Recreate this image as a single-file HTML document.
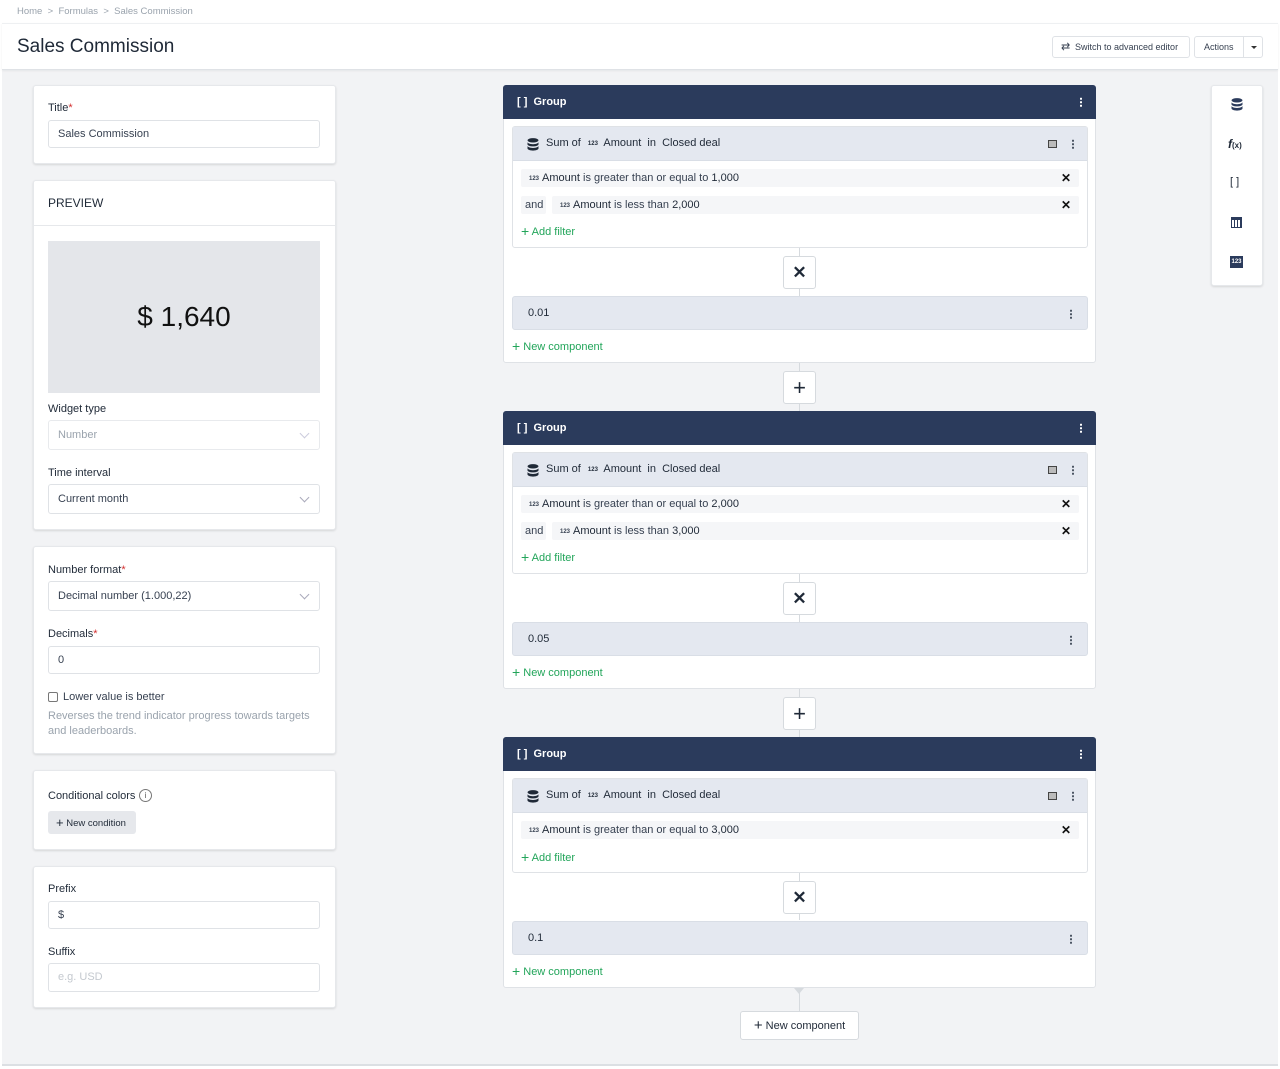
<!DOCTYPE html>
<html><head><meta charset="utf-8"><style>
*{box-sizing:border-box;margin:0;padding:0}
body{width:1280px;height:1069px;background:#fff;font-family:"Liberation Sans",Arial,sans-serif;color:#1f2937;position:relative;overflow:hidden;font-size:11px}
.a{position:absolute}
.bg{left:2px;top:70px;width:1276px;height:996px;background:#f2f3f5;border-bottom:2px solid #dcdfe3}
.hdr{left:2px;top:23px;width:1276px;height:47px;background:#fff;border-top:1px solid #eef0f2;border-bottom:1px solid #dfe2e6;box-shadow:0 1px 2px rgba(0,0,0,.06)}
.card{background:#fff;border-radius:3px;box-shadow:0 1px 2px rgba(0,0,0,.12);border:1px solid #e6e8eb}
.lbl{font-size:11px;color:#1f2937}
.req{color:#d32f2f}
.inp{left:48px;width:272px;height:29px;border:1px solid #dfe2e6;border-radius:3px;background:#fff;padding-left:9px;line-height:27px;font-size:11px;color:#374151}
.chev{position:absolute;right:11px;top:9px;width:7px;height:7px;border-right:1px solid #aab;border-bottom:1px solid #aab;transform:rotate(45deg)}
.grp{left:503px;width:593px;background:#fff;border:1px solid #dfe2e6;border-radius:3px}
.gh{left:-1px;top:-1px;width:593px;height:34px;background:#2b3b5c;border-radius:3px 3px 0 0;color:#fff;font-weight:bold;font-size:11px;line-height:34px;padding-left:14px}
.dots{position:absolute;width:2px;height:10px;background:radial-gradient(circle,#4b5563 1px,transparent 1.2px) 0 0/2px 3.5px repeat-y}
.gh .dots{background:radial-gradient(circle,#fff 1px,transparent 1.2px) 0 0/2px 3.5px repeat-y;right:14px;top:12px}
.ic{left:8px;width:576px;background:#fff;border:1px solid #dfe2e6;border-radius:3px}
.ich{left:0;top:0;width:574px;height:34px;background:#e4e8f0;border-bottom:1px solid #d9dee6;font-size:11px;line-height:33px;padding-left:33px;color:#1f2937}
.fr{height:18px;background:#f5f6f8;border-radius:2px;font-size:11px;line-height:18px;padding-left:8px;color:#374151}
.fr b{font-weight:normal;color:#1f2937}
.n123{font-size:6px;font-weight:bold;vertical-align:1px;margin-right:3px}
.x{position:absolute;right:8px;top:0;font-size:12px;color:#111;font-weight:bold}
.green{color:#22a55a;font-size:11px}
.xb{left:279px;width:33px;height:33px;background:#fff;border:1px solid #d6dade;border-radius:3px;text-align:center;line-height:31px;font-size:17px;font-weight:bold;color:#1f2937}
.val{left:8px;width:576px;height:34px;background:#e4e8f0;border:1px solid #d9dee6;border-radius:3px;line-height:32px;padding-left:15px;font-size:11px}
.vl{width:1px;background:#d6dade}
.pb{left:783px;width:33px;height:33px;background:#fff;border:1px solid #d6dade;border-radius:3px;text-align:center;line-height:31px;font-size:22px;color:#1f2937}
.db{position:absolute;left:14px;top:11px}
</style></head><body>
<svg width="0" height="0" style="position:absolute"><defs><symbol id="db" viewBox="0 0 12 13"><ellipse cx="6" cy="2.3" rx="5.5" ry="2.2" fill="currentColor"/><path d="M0.5 4v2.2c0 1.2 2.5 2.2 5.5 2.2s5.5-1 5.5-2.2V4c0 1.2-2.5 2.2-5.5 2.2S0.5 5.2 0.5 4zM0.5 7.8V10.4c0 1.2 2.5 2.2 5.5 2.2s5.5-1 5.5-2.2V7.8c0 1.2-2.5 2.2-5.5 2.2S0.5 9 0.5 7.8z" fill="currentColor"/></symbol></defs></svg>
<div class="a bg"></div>
<div class="a" style="left:17px;top:6px;font-size:9.5px;color:#9aa3ad">Home &nbsp;&gt;&nbsp; Formulas &nbsp;&gt;&nbsp; Sales Commission</div>
<div class="a hdr"></div>
<div class="a" style="left:17px;top:36px;font-size:19px;color:#1f2937">Sales Commission</div>
<div class="a" style="left:1052px;top:36px;width:138px;height:22px;border:1px solid #dfe2e6;border-radius:3px;background:#fff;font-size:9px;line-height:20px;padding-left:22px;color:#374151"><span style="position:absolute;left:8px;top:0;font-size:11px">⇄</span>Switch to advanced editor</div>
<div class="a" style="left:1194px;top:36px;width:69px;height:22px;border:1px solid #dfe2e6;border-radius:3px;background:#fff;font-size:9px;line-height:20px;padding-left:9px;color:#374151">Actions<span style="position:absolute;left:48px;top:0;width:1px;height:20px;background:#dfe2e6"></span><span style="position:absolute;left:56px;top:9px;border:3px solid transparent;border-top:3px solid #333"></span></div>

<!-- left cards -->
<div class="a card" style="left:33px;top:85px;width:303px;height:79px"></div>
<div class="a lbl" style="left:48px;top:102px">Title<span class="req">*</span></div>
<div class="a inp" style="top:120px;height:28px">Sales Commission</div>

<div class="a card" style="left:33px;top:180px;width:303px;height:350px"></div>
<div class="a" style="left:48px;top:196px;font-size:12px">PREVIEW</div>
<div class="a" style="left:34px;top:225px;width:301px;height:1px;background:#e6e8eb"></div>
<div class="a" style="left:48px;top:241px;width:272px;height:152px;background:#e4e6ea;text-align:center;line-height:152px;font-size:28px;color:#111">$ 1,640</div>
<div class="a lbl" style="left:48px;top:403px">Widget type</div>
<div class="a inp" style="top:420px;height:30px;color:#9aa3ad;border-color:#e8eaed;line-height:28px">Number<i class="chev" style="border-color:#ccd"></i></div>
<div class="a lbl" style="left:48px;top:467px">Time interval</div>
<div class="a inp" style="top:484px;height:30px;line-height:28px">Current month<i class="chev"></i></div>

<div class="a card" style="left:33px;top:546px;width:303px;height:208px"></div>
<div class="a lbl" style="left:48px;top:564px">Number format<span class="req">*</span></div>
<div class="a inp" style="top:581px;height:30px;line-height:28px">Decimal number (1.000,22)<i class="chev"></i></div>
<div class="a lbl" style="left:48px;top:628px">Decimals<span class="req">*</span></div>
<div class="a inp" style="top:646px;height:28px">0</div>
<div class="a" style="left:48px;top:692px;width:10px;height:10px;border:1px solid #777;border-radius:2px"></div>
<div class="a lbl" style="left:63px;top:691px;color:#374151">Lower value is better</div>
<div class="a" style="left:48px;top:709px;width:270px;line-height:15px;color:#9aa3ad;font-size:11px">Reverses the trend indicator progress towards targets and leaderboards.</div>

<div class="a card" style="left:33px;top:770px;width:303px;height:80px"></div>
<div class="a lbl" style="left:48px;top:790px">Conditional colors</div>
<div class="a" style="left:139px;top:789px;width:13px;height:13px;border:1px solid #777;border-radius:50%;font-size:8px;text-align:center;line-height:11px;color:#555">i</div>
<div class="a" style="left:48px;top:811px;width:88px;height:23px;background:#e6e8ec;border-radius:3px;font-size:9.5px;line-height:23px;padding-left:8px;color:#1f2937"><span style="font-size:13px;vertical-align:-1px">+</span> New condition</div>

<div class="a card" style="left:33px;top:866px;width:303px;height:142px"></div>
<div class="a lbl" style="left:48px;top:883px">Prefix</div>
<div class="a inp" style="top:901px;height:28px">$</div>
<div class="a lbl" style="left:48px;top:946px">Suffix</div>
<div class="a inp" style="top:963px;height:29px;color:#c4c9cf">e.g. USD</div>

<!-- connectors -->
<div class="a vl" style="left:799px;top:363px;height:48px"></div>
<div class="a vl" style="left:799px;top:689px;height:48px"></div>
<div class="a vl" style="left:799px;top:988px;height:24px"></div>
<div class="a" style="left:794px;top:988px;border:5px solid transparent;border-top:6px solid #d6dade"></div>
<div class="a pb" style="top:371px">+</div>
<div class="a pb" style="top:697px">+</div>

<!-- group 1 -->
<div class="a grp" style="top:85px;height:278px">
 <div class="a gh">[ ]&nbsp; Group<i class="dots"></i></div>
 <div class="a vl" style="left:295px;top:162px;height:48px"></div>
 <div class="a ic" style="top:40px;height:122px">
  <div class="a ich"><svg class="db" width="12" height="13" style="color:#1f2937"><use href="#db"/></svg>Sum of <span class="n123" style="margin-left:4px">123</span> Amount &nbsp;in&nbsp; Closed deal<span class="a" style="left:535px;top:13px;width:9px;height:8px;border:1px solid #444;background:#bbb"></span><i class="dots" style="left:559px;top:12px"></i></div>
  <div class="a fr" style="left:8px;top:42px;width:558px"><span class="n123">123</span><b>Amount</b> is greater than or equal to <b>1,000</b><span class="x">✕</span></div>
  <div class="a fr" style="left:8px;top:69px;width:25px;padding-left:4px">and</div>
  <div class="a fr" style="left:39px;top:69px;width:527px"><span class="n123">123</span><b>Amount</b> is less than <b>2,000</b><span class="x">✕</span></div>
  <div class="a green" style="left:8px;top:96px"><span style="font-size:14px;vertical-align:-1px">+</span> Add filter</div>
 </div>
 <div class="a xb" style="top:170px">✕</div>
 <div class="a val" style="top:210px">0.01<i class="dots" style="right:15px;top:12px"></i></div>
 <div class="a green" style="left:8px;top:252px"><span style="font-size:14px;vertical-align:-1px">+</span> New component</div>
</div>

<!-- group 2 -->
<div class="a grp" style="top:411px;height:278px">
 <div class="a gh">[ ]&nbsp; Group<i class="dots"></i></div>
 <div class="a vl" style="left:295px;top:162px;height:48px"></div>
 <div class="a ic" style="top:40px;height:122px">
  <div class="a ich"><svg class="db" width="12" height="13" style="color:#1f2937"><use href="#db"/></svg>Sum of <span class="n123" style="margin-left:4px">123</span> Amount &nbsp;in&nbsp; Closed deal<span class="a" style="left:535px;top:13px;width:9px;height:8px;border:1px solid #444;background:#bbb"></span><i class="dots" style="left:559px;top:12px"></i></div>
  <div class="a fr" style="left:8px;top:42px;width:558px"><span class="n123">123</span><b>Amount</b> is greater than or equal to <b>2,000</b><span class="x">✕</span></div>
  <div class="a fr" style="left:8px;top:69px;width:25px;padding-left:4px">and</div>
  <div class="a fr" style="left:39px;top:69px;width:527px"><span class="n123">123</span><b>Amount</b> is less than <b>3,000</b><span class="x">✕</span></div>
  <div class="a green" style="left:8px;top:96px"><span style="font-size:14px;vertical-align:-1px">+</span> Add filter</div>
 </div>
 <div class="a xb" style="top:170px">✕</div>
 <div class="a val" style="top:210px">0.05<i class="dots" style="right:15px;top:12px"></i></div>
 <div class="a green" style="left:8px;top:252px"><span style="font-size:14px;vertical-align:-1px">+</span> New component</div>
</div>

<!-- group 3 -->
<div class="a grp" style="top:737px;height:251px">
 <div class="a gh">[ ]&nbsp; Group<i class="dots"></i></div>
 <div class="a vl" style="left:295px;top:134px;height:48px"></div>
 <div class="a ic" style="top:40px;height:95px">
  <div class="a ich"><svg class="db" width="12" height="13" style="color:#1f2937"><use href="#db"/></svg>Sum of <span class="n123" style="margin-left:4px">123</span> Amount &nbsp;in&nbsp; Closed deal<span class="a" style="left:535px;top:13px;width:9px;height:8px;border:1px solid #444;background:#bbb"></span><i class="dots" style="left:559px;top:12px"></i></div>
  <div class="a fr" style="left:8px;top:42px;width:558px"><span class="n123">123</span><b>Amount</b> is greater than or equal to <b>3,000</b><span class="x">✕</span></div>
  <div class="a green" style="left:8px;top:70px"><span style="font-size:14px;vertical-align:-1px">+</span> Add filter</div>
 </div>
 <div class="a xb" style="top:143px">✕</div>
 <div class="a val" style="top:183px">0.1<i class="dots" style="right:15px;top:12px"></i></div>
 <div class="a green" style="left:8px;top:225px"><span style="font-size:14px;vertical-align:-1px">+</span> New component</div>
</div>

<div class="a" style="left:740px;top:1011px;width:119px;height:29px;background:#fff;border:1px solid #d6dade;border-radius:3px;text-align:center;line-height:27px;font-size:11px;color:#1f2937"><span style="font-size:15px;vertical-align:-1px">+</span> New component</div>

<!-- right toolbar -->
<div class="a card" style="left:1211px;top:85px;width:52px;height:201px"></div>
<svg class="a" style="left:1231px;top:98px;color:#2b3b5c" width="12" height="13"><use href="#db"/></svg>
<div class="a" style="left:1228px;top:137px;font-size:12px;font-weight:bold;font-style:italic;color:#1f2937">f<span style="font-size:8px;font-style:normal">(x)</span></div>
<div class="a" style="left:1230px;top:176px;font-size:11px;color:#1f2937">[ ]</div>
<div class="a" style="left:1231px;top:217px;width:11px;height:11px;border:1px solid #2b3b5c;border-top:3px solid #2b3b5c;background:repeating-linear-gradient(90deg,#fff 0 2px,#2b3b5c 2px 3px)"></div>
<div class="a" style="left:1230px;top:256px;width:13px;height:12px;background:#2b3b5c;color:#fff;font-size:6px;font-weight:bold;text-align:center;line-height:12px">123</div>
</body></html>
